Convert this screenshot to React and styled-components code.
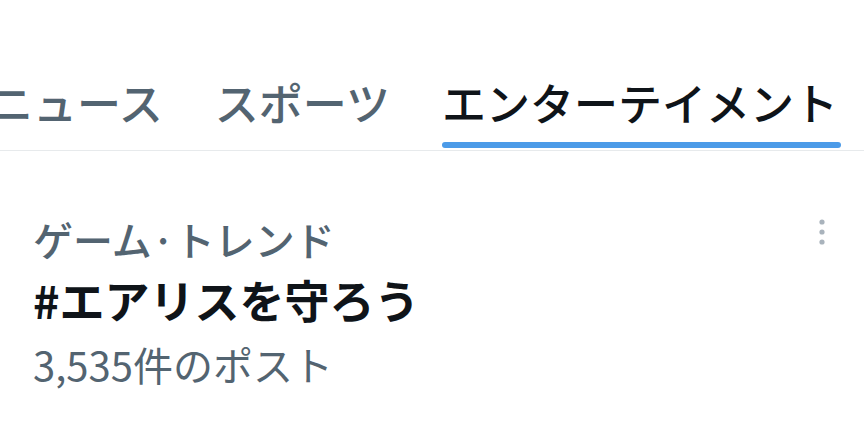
import { createGlobalStyle, styled } from 'styled-components';

const GlobalStyle = createGlobalStyle`
    html, body {
        margin: 0;
        padding: 0;
        background: #ffffff;
        overflow: hidden;
    }
    body {
        font-family: 'Noto Sans CJK JP', 'Noto Sans', sans-serif;
    }
`;

const tabs = [
    { label: 'ニュース', active: false },
    { label: 'スポーツ', active: false },
    { label: 'エンターテイメント', active: true },
];

const App = () => {
    return (
        <Page>
            <GlobalStyle />
            <TabBar>
                <TabList>
                    {tabs.map((tab) => (
                        <Tab key={tab.label}>
                            <TabLabel $active={tab.active}>{tab.label}</TabLabel>
                            <TabIndicator $active={tab.active} />
                        </Tab>
                    ))}
                </TabList>
            </TabBar>
            <TrendRow>
                <TrendInfo>
                    <TrendCategory>ゲーム·トレンド</TrendCategory>
                    <TrendTitle>#エアリスを守ろう</TrendTitle>
                    <TrendCount>3,535件のポスト</TrendCount>
                </TrendInfo>
                <MoreButton aria-label="もっと見る">
                    <svg width="6" height="26" viewBox="0 0 6 26">
                        <circle cx="3" cy="3" r="2.6" fill="#a9b3bc" />
                        <circle cx="3" cy="13" r="2.6" fill="#a9b3bc" />
                        <circle cx="3" cy="23" r="2.6" fill="#a9b3bc" />
                    </svg>
                </MoreButton>
            </TrendRow>
        </Page>
    );
};

export default App;

const Page = styled.div`
    width: 864px;
    height: 431px;
    overflow: hidden;
    background: #ffffff;
`;

const TabBar = styled.div`
    height: 150px;
    border-bottom: 1px solid #e7eaec;
    display: flex;
    align-items: flex-end;
    overflow: hidden;
`;

const TabList = styled.div`
    display: flex;
    align-items: flex-end;
    gap: 52px;
    margin-left: -11px;
`;

const Tab = styled.div`
    display: flex;
    flex-direction: column;
    align-items: stretch;
    padding-bottom: 2px;
`;

const TabLabel = styled.div`
    font-size: 44px;
    line-height: 44px;
    font-weight: 500;
    white-space: nowrap;
    color: ${(props) => (props.$active ? '#0f1419' : '#536471')};
`;

const TabIndicator = styled.div`
    height: 6px;
    margin-top: 18px;
    margin-right: -3px;
    border-radius: 3px;
    background: ${(props) => (props.$active ? '#4c9be8' : 'transparent')};
`;

const TrendRow = styled.div`
    display: flex;
    justify-content: space-between;
    align-items: flex-start;
    padding: 63px 39px 0 33px;
`;

const TrendInfo = styled.div`
    display: flex;
    flex-direction: column;
`;

const TrendCategory = styled.div`
    font-size: 40px;
    line-height: 50px;
    font-weight: 500;
    color: #536471;
`;

const TrendTitle = styled.div`
    margin-top: 11px;
    font-size: 45px;
    line-height: 50px;
    font-weight: 700;
    color: #0f1419;
`;

const TrendCount = styled.div`
    margin-top: 14px;
    font-size: 40px;
    line-height: 50px;
    color: #536471;
`;

const MoreButton = styled.button`
    margin-top: 5px;
    padding: 0;
    border: none;
    background: none;
    display: flex;
`;
